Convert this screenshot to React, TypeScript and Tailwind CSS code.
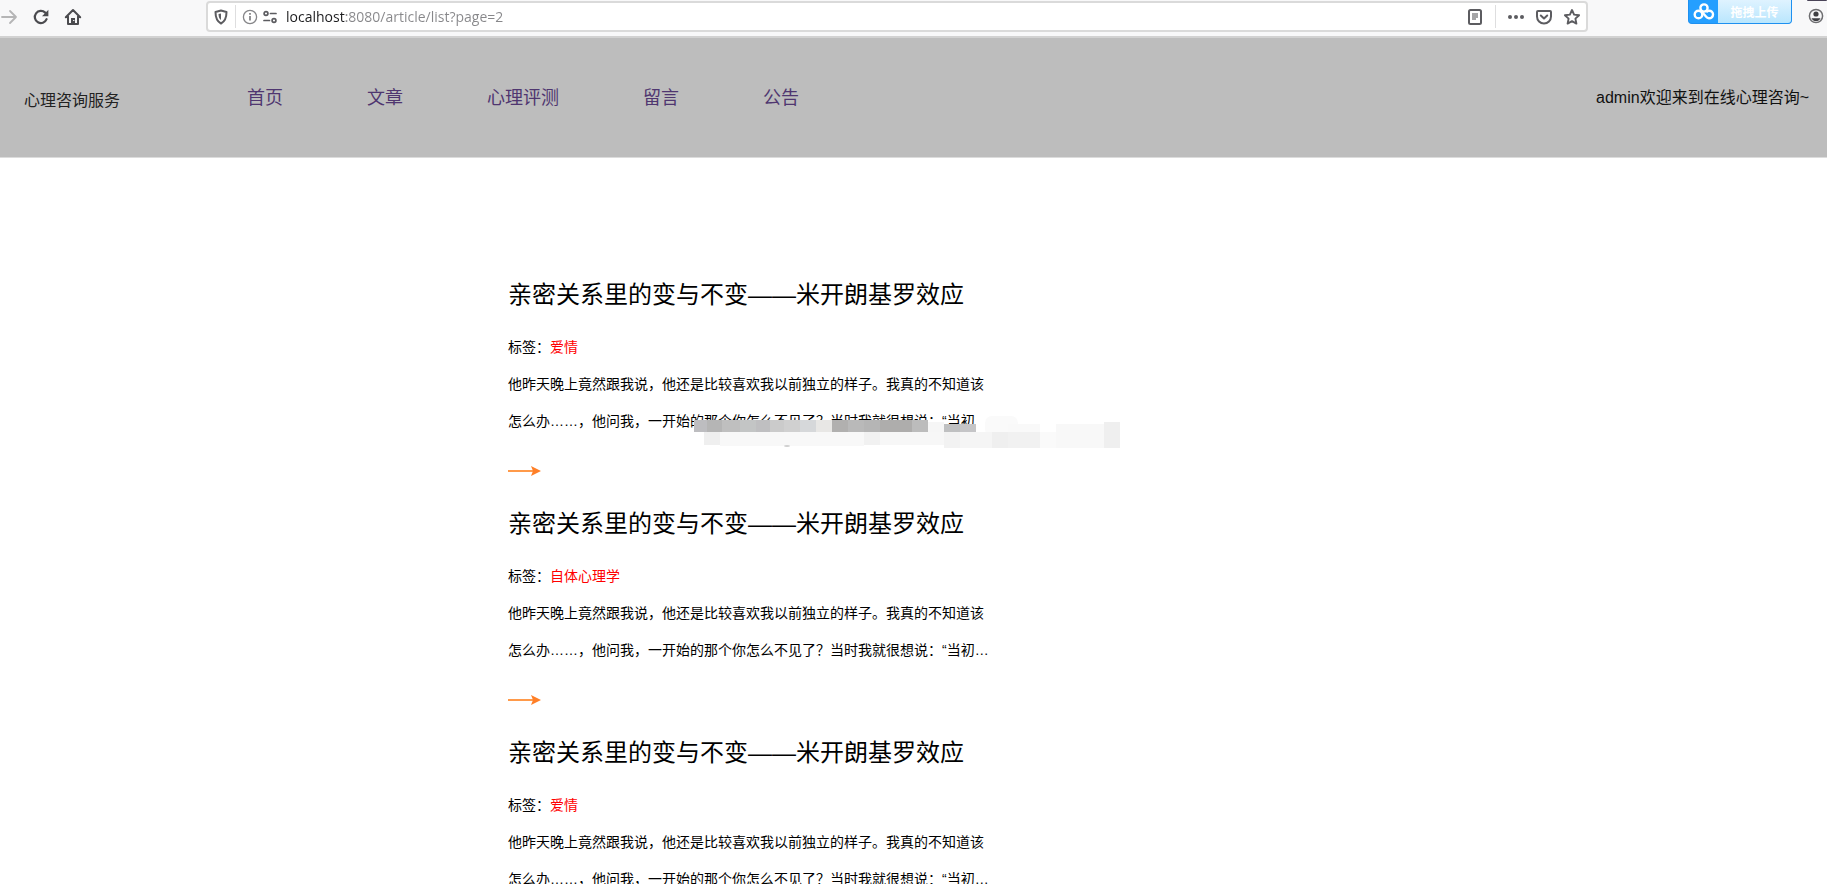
type Article = {
  id: number
  title: string
  tag: string
  summary: string
  masked?: boolean
}

const NAV_ITEMS = ["首页", "文章", "心理评测", "留言", "公告"]

const TITLE = "亲密关系里的变与不变——米开朗基罗效应"
const SUMMARY =
  "他昨天晚上竟然跟我说，他还是比较喜欢我以前独立的样子。我真的不知道该怎么办……，他问我，一开始的那个你怎么不见了？当时我就很想说：“当初…"

const ARTICLES: Article[] = [
  { id: 1, title: TITLE, tag: "爱情", summary: SUMMARY, masked: true },
  { id: 2, title: TITLE, tag: "自体心理学", summary: SUMMARY },
  { id: 3, title: TITLE, tag: "爱情", summary: SUMMARY },
]

// [x, y, width, height, fill]
const MOSAIC: [number, number, number, number, string][] = [
  [2, 12, 14, 12, "#bdbdc0"],
  [15, 12, 15, 12, "#b5b5b5"],
  [30, 12, 18, 12, "#bfbfbf"],
  [48, 12, 16, 12, "#c3c5c5"],
  [64, 12, 14, 12, "#bfbfc1"],
  [78, 12, 14, 12, "#cbcbcb"],
  [92, 12, 16, 12, "#d0d0d0"],
  [108, 12, 16, 12, "#d6d8da"],
  [124, 12, 16, 12, "#e8e7e5"],
  [140, 12, 16, 12, "#b1b0af"],
  [156, 12, 16, 12, "#b9b9b9"],
  [172, 12, 16, 12, "#b5b5b5"],
  [188, 12, 32, 12, "#aeadac"],
  [220, 12, 16, 12, "#bcbcbc"],
  [236, 14, 16, 10, "#f6f6f6"],
  [252, 16, 16, 8, "#bfc0c1"],
  [268, 16, 16, 8, "#c5c5c7"],
  [12, 24, 16, 13, "#efefef"],
  [28, 24, 144, 14, "#f8f8f8"],
  [172, 24, 16, 13, "#f1f1f1"],
  [188, 24, 64, 13, "#f7f7f7"],
  [252, 24, 16, 16, "#f2f2f2"],
  [268, 24, 32, 16, "#f5f5f5"],
  [300, 24, 16, 16, "#efefef"],
  [316, 16, 32, 8, "#f9f9f9"],
  [316, 24, 32, 16, "#f1f1f1"],
  [348, 24, 16, 16, "#fafafa"],
  [364, 16, 48, 24, "#f8f8f8"],
  [412, 14, 16, 26, "#efefef"],
]

function ForwardIcon() {
  return (
    <svg width="18" height="18" viewBox="0 0 18 18" fill="none" stroke="currentColor" strokeWidth="1.8" strokeLinecap="round" strokeLinejoin="round">
      <path d="M2 9h14M10 3l6 6-6 6" />
    </svg>
  )
}

function ReloadIcon() {
  return (
    <svg width="18" height="18" viewBox="0 0 18 18" fill="none" stroke="currentColor" strokeWidth="2.2" strokeLinecap="round">
      <path d="M14.6 11.2A6.1 6.1 0 1 1 13.2 4.6" />
      <path d="M16.4 1.8v6.4H10z" fill="currentColor" stroke="none" />
    </svg>
  )
}

function HomeIcon() {
  return (
    <svg width="18" height="18" viewBox="0 0 18 18" fill="none" stroke="currentColor" strokeWidth="2" strokeLinecap="round" strokeLinejoin="round">
      <path d="M1.8 9.2 9 2l7.2 7.2M4 8.5V16h10V8.5" />
      <path d="M7 15.5V10h4v5.5z" fill="currentColor" stroke="none" />
      <path d="M9.5 12.5h.5" stroke="#f8f8f9" strokeWidth="1" />
    </svg>
  )
}

function ShieldIcon() {
  return (
    <svg width="16" height="16" viewBox="0 0 16 16" fill="none" stroke="currentColor" strokeWidth="2" strokeLinejoin="round">
      <path d="M8 1.5 13.5 3c0 5-.8 9-5.5 11.500C3.300 12 2.500 8 2.500 3z" />
      <path d="M8 4.5V11C6.3 9.8 5.6 8 5.5 5z" fill="currentColor" stroke="none" />
    </svg>
  )
}

function InfoIcon() {
  return (
    <svg width="16" height="16" viewBox="0 0 16 16" fill="none" stroke="currentColor" strokeWidth="1.3">
      <circle cx="8" cy="8" r="6.6" />
      <path d="M8 7v4.500M8 4v1.700" strokeWidth="1.8" />
    </svg>
  )
}

function PermissionsIcon() {
  return (
    <svg width="16" height="16" viewBox="0 0 16 16" fill="none" stroke="currentColor" strokeWidth="1.7" strokeLinecap="round">
      <circle cx="4" cy="4.5" r="1.9" />
      <path d="M8.5 4.500H14M2 11.500h5.500" />
      <circle cx="12" cy="11.5" r="1.9" />
    </svg>
  )
}

function ReaderIcon() {
  return (
    <svg width="16" height="18" viewBox="0 0 16 18" fill="none" stroke="currentColor" strokeWidth="2">
      <rect x="2" y="2" width="12" height="14" rx="1.5" />
      <path d="M5 5h6v5H9v2H5z" fill="#a5a5a7" stroke="none" />
    </svg>
  )
}

function MoreIcon() {
  return (
    <svg width="18" height="16" viewBox="0 0 18 16" fill="currentColor">
      <circle cx="3" cy="8" r="2" />
      <circle cx="9" cy="8" r="2" />
      <circle cx="15" cy="8" r="2" />
    </svg>
  )
}

function PocketIcon() {
  return (
    <svg width="18" height="18" viewBox="0 0 18 18" fill="none" stroke="currentColor" strokeWidth="2" strokeLinecap="round" strokeLinejoin="round">
      <path d="M3 3h12a1 1 0 0 1 1 1v4.500a7 7 0 0 1-14 0V4a1 1 0 0 1 1-1z" />
      <path d="m5.8 7.500 3.200 3 3.200-3" />
    </svg>
  )
}

function StarIcon() {
  return (
    <svg width="18" height="18" viewBox="0 0 18 18" fill="none" stroke="currentColor" strokeWidth="1.9" strokeLinejoin="round">
      <path d="m9 2 2.100 4.600 5 .6-3.700 3.400 1 5L9 13.100l-4.400 2.500 1-5L1.900 7.200l5-.6z" />
    </svg>
  )
}

function AccountIcon() {
  return (
    <svg width="18" height="18" viewBox="0 0 18 18" fill="none">
      <circle cx="9" cy="9" r="6.6" stroke="#6d6d70" strokeWidth="1.5" />
      <circle cx="9" cy="7" r="2.6" fill="#3f3f43" />
      <path d="M4.5 11.200h9C12.500 13.300 11 14 9 14s-3.500-.7-4.500-2.800z" fill="#3f3f43" />
    </svg>
  )
}

function UploadButton() {
  return (
    <button className="flex h-6 w-[104px] shrink-0 overflow-hidden rounded-b border border-t-0 border-[#1e90f0] bg-[#259fff]">
      <span className="flex h-full w-[29px] items-center justify-center">
        <svg width="22" height="18" viewBox="0 0 22 18" fill="none" stroke="#fff" strokeWidth="2.4">
          <circle cx="11" cy="5" r="3.6" />
          <circle cx="5.5" cy="11.5" r="3.8" />
          <path d="M13.2 9.200a3.800 3.800 0 1 1 0 4.600L9 9" />
        </svg>
      </span>
      <span className="flex h-full flex-1 items-center justify-center bg-linear-to-b from-[#dff3ff] to-[#b9e6fd] font-['Noto_Sans_CJK_SC',sans-serif] text-xs font-bold text-white">
        拖拽上传
      </span>
    </button>
  )
}

function BrowserBar() {
  return (
    <div className="flex h-[38px] items-start border-b-2 border-[#d2d2d2] bg-[#f8f8f9] font-['Open_Sans',sans-serif]">
      <div className="flex h-[33px] w-[206px] shrink-0 items-center gap-[14px] text-[#4b4b4f]">
        <button aria-label="前进" className="text-[#b5b5b6]"><ForwardIcon /></button>
        <button aria-label="刷新"><ReloadIcon /></button>
        <button aria-label="主页"><HomeIcon /></button>
      </div>
      <div className="mt-px flex h-[31px] flex-1 items-center rounded-sm border-2 border-[#dadada] bg-white pr-[5px] pl-[5px] text-[#5c5c60]">
        <button aria-label="跟踪保护"><ShieldIcon /></button>
        <span className="mx-[6px] h-[23px] w-px bg-[#dededf]" />
        <button aria-label="网站信息" className="text-[#858588]"><InfoIcon /></button>
        <button aria-label="权限" className="ml-1"><PermissionsIcon /></button>
        {/* 域名深色，路径灰色 */}
        <input
          aria-label="地址"
          readOnly
          defaultValue="localhost:8080/article/list?page=2"
          className="ml-2 min-w-0 flex-1 bg-[linear-gradient(90deg,#1c1c1e_60px,#87878a_60px)] bg-clip-text text-sm text-transparent outline-none"
        />
        <button aria-label="阅读模式"><ReaderIcon /></button>
        <span className="mr-[11px] ml-3 h-[23px] w-px bg-[#dededf]" />
        <button aria-label="更多"><MoreIcon /></button>
        <button aria-label="收藏到 Pocket" className="ml-[10px]"><PocketIcon /></button>
        <button aria-label="加入书签" className="ml-[10px]"><StarIcon /></button>
      </div>
      <div className="relative flex w-[239px] shrink-0 justify-end gap-[15px] pr-[2px]">
        <UploadButton />
        <button aria-label="账户" className="mt-[7px] h-[18px]"><AccountIcon /></button>
        <span className="absolute top-0 right-0 h-px w-5 rounded-b-full bg-[#4a4458]" />
      </div>
    </div>
  )
}

function Mosaic() {
  return (
    <svg aria-hidden="true" width="440" height="42" className="absolute top-[131px] left-[184px]">
      <rect x="16" y="20" width="270" height="20" fill="#fff" />
      <rect x="283" y="4" width="20" height="28" fill="#fff" />
      <rect x="293" y="8" width="33" height="20" rx="7" fill="#fafafa" />
      {MOSAIC.map(([x, y, w, h, fill]) => (
        <rect key={`${x}-${y}`} x={x} y={y} width={w} height={h} fill={fill} />
      ))}
      <ellipse cx="95" cy="38" rx="3" ry="1" fill="#cfcfcf" />
    </svg>
  )
}

function ArticleItem({ article }: { article: Article }) {
  return (
    <article className="relative h-[229px] w-[488px]">
      <h2 className="text-2xl leading-9">{article.title}</h2>
      <p className="mt-4 text-sm leading-[37px]">
        标签：<span className="text-[#ff0000]">{article.tag}</span>
      </p>
      <p className="text-sm leading-[37px]">{article.summary}</p>
      <a href="#" aria-label="阅读全文" className="mt-5 block w-[34px]">
        <svg width="34" height="22" viewBox="0 0 34 22">
          <path d="M0 11h26" stroke="#ff9a4a" strokeWidth="2" />
          <path d="m23 6 10 5-10 5 2-5z" fill="#ff7f27" />
        </svg>
      </a>
      {article.masked && <Mosaic />}
    </article>
  )
}

export default function App() {
  return (
    <div className="h-screen overflow-hidden bg-white font-['Liberation_Sans','Noto_Sans_CJK_SC',sans-serif] text-black">
      <BrowserBar />
      <header className="flex h-[120px] items-center border-b border-[#dcdcdc] bg-[#bdbdbd] pr-[18px] pl-6">
        <span className="w-[223px] pt-1.5 text-base text-[#222]">心理咨询服务</span>
        <nav className="flex flex-1 gap-[84px] text-lg text-[#4f3670]">
          {NAV_ITEMS.map((item) => (
            <a key={item} href="#">{item}</a>
          ))}
        </nav>
        <span className="text-[#111]">admin欢迎来到在线心理咨询~</span>
      </header>
      <main className="pt-[119px] pl-[508px]">
        {ARTICLES.map((article) => (
          <ArticleItem key={article.id} article={article} />
        ))}
      </main>
    </div>
  )
}
